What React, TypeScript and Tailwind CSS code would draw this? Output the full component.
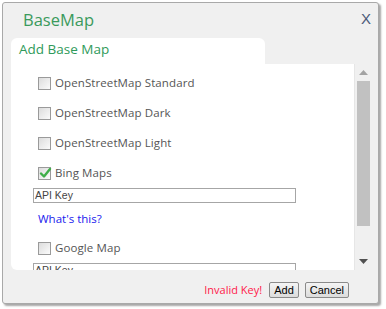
import React from "react";

const font = { fontFamily: '"Open Sans", "Noto Sans", sans-serif' };

function Box({ checked }: { checked?: boolean }) {
  return (
    <div className="relative w-[13px] h-[13px] border border-[#9a9a9a] bg-gradient-to-br from-[#dcdcdc] to-[#fbfbfb] shrink-0">
      {checked && (
        <svg className="absolute left-[0px] top-[-1px]" width="13" height="12" viewBox="0 0 13 12">
          <path d="M2 6.5 L5 9.5 L11 2" fill="none" stroke="#3fae49" strokeWidth="2.4" strokeLinecap="round" strokeLinejoin="round" />
        </svg>
      )}
    </div>
  );
}

function Row({ label, checked }: { label: string; checked?: boolean }) {
  return (
    <div className="h-[30px] flex items-center pl-[27px] gap-[4px]">
      <Box checked={checked} />
      <span className="text-[11.5px] text-[#555] tracking-[0.1px]">{label}</span>
    </div>
  );
}

function KeyInput() {
  return (
    <div className="ml-[22px] w-[263px] h-[15px] border border-[#a6a6a6] bg-white flex items-center pl-[1px]">
      <span className="text-[10.5px] text-[#444] leading-none" style={{ fontFamily: '"Liberation Sans", Arial, sans-serif' }}>API Key</span>
    </div>
  );
}

export default function App() {
  return (
    <div className="relative w-[386px] h-[309px] bg-white" style={font}>
      <div className="absolute left-[2px] top-[2px] w-[377px] h-[302px] border border-[#a9a9a9] rounded-[3px] bg-[#f0f0f0] shadow-[2px_2px_2px_rgba(0,0,0,0.35)] flex flex-col">
        <div className="h-[35px] flex items-start justify-between pl-[20px] pr-[7px]">
          <span className="mt-[4px] text-[16.5px] text-[#3a9a5c] leading-[26px]">BaseMap</span>
          <span className="mt-[8px] text-[15px] text-[#4c5a78] leading-[16px]" style={{ fontFamily: '"Liberation Sans", Arial, sans-serif' }}>X</span>
        </div>
        <div className="ml-[8px] w-[254px] h-[26px] bg-white rounded-t-[6px] pl-[8px] flex items-center">
          <span className="text-[13.5px] text-[#2f9a5a] leading-none mt-[-2px]">Add Base Map</span>
        </div>
        <div className="ml-[8px] flex h-[206px]">
          <div className="w-[343px] h-full bg-white rounded-bl-[6px] overflow-hidden pt-[4px]">
            <Row label="OpenStreetMap Standard" />
            <Row label="OpenStreetMap Dark" />
            <Row label="OpenStreetMap Light" />
            <Row label="Bing Maps" checked />
            <KeyInput />
            <div className="h-[30px] flex items-center pl-[27px] pt-[1px]">
              <span className="text-[11.5px] text-[#1a1aee]">What's this?</span>
            </div>
            <Row label="Google Map" />
            <KeyInput />
          </div>
          <div className="w-[17px] h-full bg-[#f0f0f0] border-l border-[#e6e6e6] flex flex-col items-center">
            <div className="h-[17px] flex items-center justify-center">
              <svg width="9" height="5" viewBox="0 0 9 5"><path d="M0 5 L4.5 0 L9 5 Z" fill="#a3a3a3" /></svg>
            </div>
            <div className="w-[13px] h-[145px] bg-[#c1c1c1]" />
            <div className="flex-1" />
            <div className="h-[17px] flex items-center justify-center">
              <svg width="9" height="5" viewBox="0 0 9 5"><path d="M0 0 L9 0 L4.5 5 Z" fill="#505050" /></svg>
            </div>
          </div>
        </div>
        <div className="flex items-center justify-end gap-[6px] pr-[29px] mt-[12px]">
          <span className="text-[11px] text-[#ff1a4a] mr-[1px]">Invalid Key!</span>
          <button className="h-[16px] px-[4px] border border-[#8a8a8a] rounded-[2px] bg-gradient-to-b from-[#f4f4f4] to-[#dcdcdc] text-[11px] leading-none text-black" style={{ fontFamily: '"Liberation Sans", Arial, sans-serif' }}>Add</button>
          <button className="h-[16px] px-[4px] border border-[#8a8a8a] rounded-[2px] bg-gradient-to-b from-[#f4f4f4] to-[#dcdcdc] text-[11px] leading-none text-black" style={{ fontFamily: '"Liberation Sans", Arial, sans-serif' }}>Cancel</button>
        </div>
      </div>
    </div>
  );
}
